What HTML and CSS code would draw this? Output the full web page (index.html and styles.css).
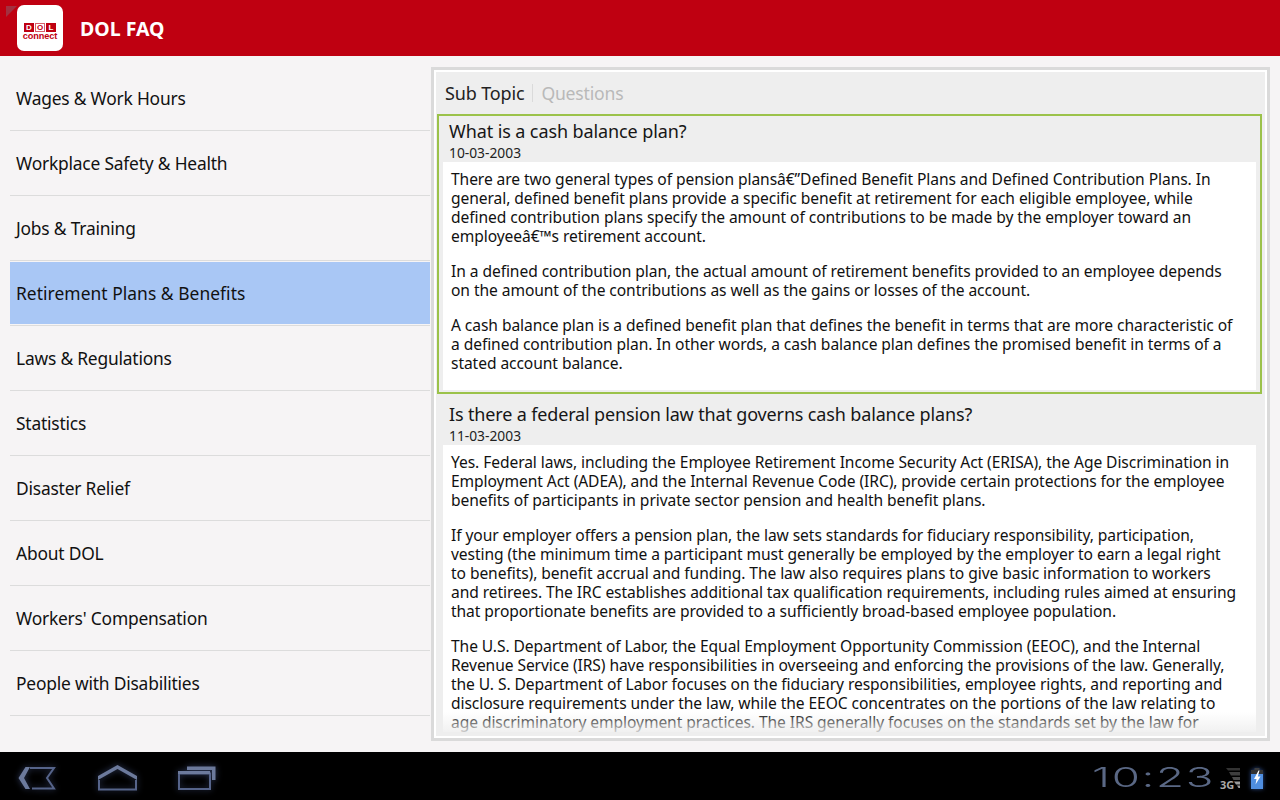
FILE: index.html
```html
<!DOCTYPE html>
<html lang="en">
<head>
<meta charset="utf-8">
<title>DOL FAQ</title>
<link rel="stylesheet" href="styles.css">
</head>
<body>
<div class="screen">
  <header class="appbar">
    <span class="corner"></span>
    <div class="logo">
      <div class="logo-boxes"><span>D</span><span class="open">O</span><span>L</span></div>
      <div class="logo-word">connect</div>
    </div>
    <h1 class="title">DOL FAQ</h1>
  </header>
  <main class="content">
    <nav class="topics">
      <div class="topic">Wages &amp; Work Hours</div>
      <div class="topic">Workplace Safety &amp; Health</div>
      <div class="topic">Jobs &amp; Training</div>
      <div class="topic selected">Retirement Plans &amp; Benefits</div>
      <div class="topic">Laws &amp; Regulations</div>
      <div class="topic">Statistics</div>
      <div class="topic">Disaster Relief</div>
      <div class="topic">About DOL</div>
      <div class="topic">Workers' Compensation</div>
      <div class="topic">People with Disabilities</div>
    </nav>
    <section class="panel">
      <div class="panel-inner">
        <div class="crumbs"><span class="crumb">Sub Topic</span><span class="crumb-sep"></span><span class="crumb muted">Questions</span></div>
        <article class="faq active">
          <h2 class="q">What is a cash balance plan?</h2>
          <div class="date">10-03-2003</div>
          <div class="answer">
            <p>There are two general types of pension plansâ€”Defined Benefit Plans and Defined Contribution Plans. In<br>general, defined benefit plans provide a specific benefit at retirement for each eligible employee, while<br>defined contribution plans specify the amount of contributions to be made by the employer toward an<br>employeeâ€™s retirement account.</p>
            <p>In a defined contribution plan, the actual amount of retirement benefits provided to an employee depends<br>on the amount of the contributions as well as the gains or losses of the account.</p>
            <p>A cash balance plan is a defined benefit plan that defines the benefit in terms that are more characteristic of<br>a defined contribution plan. In other words, a cash balance plan defines the promised benefit in terms of a<br>stated account balance.</p>
          </div>
        </article>
        <article class="faq">
          <h2 class="q">Is there a federal pension law that governs cash balance plans?</h2>
          <div class="date">11-03-2003</div>
          <div class="answer">
            <p>Yes. Federal laws, including the Employee Retirement Income Security Act (ERISA), the Age Discrimination in<br>Employment Act (ADEA), and the Internal Revenue Code (IRC), provide certain protections for the employee<br>benefits of participants in private sector pension and health benefit plans.</p>
            <p>If your employer offers a pension plan, the law sets standards for fiduciary responsibility, participation,<br>vesting (the minimum time a participant must generally be employed by the employer to earn a legal right<br>to benefits), benefit accrual and funding. The law also requires plans to give basic information to workers<br>and retirees. The IRC establishes additional tax qualification requirements, including rules aimed at ensuring<br>that proportionate benefits are provided to a sufficiently broad-based employee population.</p>
            <p>The U.S. Department of Labor, the Equal Employment Opportunity Commission (EEOC), and the Internal<br>Revenue Service (IRS) have responsibilities in overseeing and enforcing the provisions of the law. Generally,<br>the U. S. Department of Labor focuses on the fiduciary responsibilities, employee rights, and reporting and<br>disclosure requirements under the law, while the EEOC concentrates on the portions of the law relating to<br>age discriminatory employment practices. The IRS generally focuses on the standards set by the law for</p>
          </div>
        </article>
        <div class="fade"></div>
      </div>
    </section>
  </main>
  <footer class="sysbar">
    <div class="nav-icons">
      <svg class="nav-icon" width="38" height="24" viewBox="0 0 38 24" fill="none">
        <path d="M7.5 1 L0.5 12 L7.5 23 L12 23 L6 12 L12 1 Z" fill="#6c7a9c"/>
        <path d="M12 2 H36 L29 12 L36 22.5 H14" stroke="#56648a" stroke-width="2"/>
      </svg>
      <svg class="nav-icon home" width="40" height="26" viewBox="0 0 40 26" fill="none">
        <path d="M0 11 L19.5 0 L39 11 V15 L19.5 4 L0 15 Z" fill="#6c7a9c"/>
        <path d="M1 15 V24.5 H38 V15" stroke="#56648a" stroke-width="2"/>
      </svg>
      <svg class="nav-icon" width="38" height="24" viewBox="0 0 38 24" fill="none">
        <path d="M9 0.5 H37.5 V14 H34 V4 H9 Z" fill="#6c7a9c"/>
        <path d="M1 7.5 H32 V23 H1 Z" stroke="#56648a" stroke-width="2"/>
        <path d="M0 5 H32 V8 H0 Z" fill="#6c7a9c"/>
      </svg>
    </div>
    <div class="status">
      <span class="clock">10:23</span>
      <div class="signal">
        <svg width="20" height="20" viewBox="0 0 20 20">
          <path d="M5 0 H19 V2.5 H7 Z" fill="#333"/>
          <path d="M8 4 H19 V7.5 H10 Z" fill="#3e3e3e"/>
          <path d="M11 9 H19 V12 H12.5 Z" fill="#4a4a4a"/>
          <path d="M13 13.5 H19 V16.5 H15 Z" fill="#9a9a9a"/>
          <path d="M16 17.5 H19 V20 H17.5 Z" fill="#9a9a9a"/>
        </svg>
        <span class="net">3G</span>
      </div>
      <svg class="battery" width="12" height="21" viewBox="0 0 12 21">
        <rect x="3.5" y="0" width="5" height="3" fill="#3c3c3c"/>
        <rect x="0" y="2" width="12" height="6" fill="#333"/>
        <rect x="0" y="6" width="12" height="15" fill="#4f8ee0"/>
        <path d="M7.5 2.5 L3 11 H5.5 L4.5 16.5 L9.5 8.5 H6.8 L8.5 2.5 Z" fill="#fff"/>
      </svg>
    </div>
  </footer>
</div>
</body>
</html>
```

FILE: styles.css
```css
* { box-sizing: border-box; }
html, body { margin: 0; padding: 0; }
body { width: 1280px; height: 800px; overflow: hidden; font-family: "Noto Sans", "Open Sans", sans-serif; color: #111; }
.screen { width: 1280px; height: 800px; display: flex; flex-direction: column; background: #f6f4f5; }

.appbar { height: 56px; flex: none; background: #bf0011; display: flex; align-items: center; padding-left: 17px; position: relative; }
.corner { position: absolute; left: 6px; top: 6px; width: 0; height: 0; border-top: 11px solid #a33040; border-right: 11px solid transparent; }
.logo { width: 46px; height: 46px; background: #fff; border-radius: 7px; display: flex; flex-direction: column; align-items: center; padding-top: 18px; position: relative; z-index: 1; }
.logo-boxes { display: flex; gap: 1px; }
.logo-boxes span { width: 10px; height: 9px; background: #bf0011; color: #fff; font: bold 8px/9px "Liberation Sans", sans-serif; text-align: center; }
.logo-boxes .open { background: #fff; color: #bf0011; box-shadow: inset 0 0 0 1px #d9606c; }
.logo-word { font: bold 9.2px/9px "Liberation Sans", sans-serif; color: #bf0011; letter-spacing: -0.1px; margin-top: 0; }
.title { margin: 2px 0 0 17px; font-size: 19.5px; font-weight: 700; line-height: 26px; color: #fff; }

.content { flex: 1; min-height: 0; display: flex; }
.topics { width: 420px; margin-left: 10px; flex: none; padding-top: 10px; }
.topic { height: 65px; border-bottom: 1px solid #dcdcdc; padding-left: 6px; font-size: 17.4px; letter-spacing: -0.2px; line-height: 65px; color: #111; }
.topic.selected { background: #a9c7f5; height: 62px; margin: 1px 0 2px; line-height: 62px; letter-spacing: 0.05px; border-bottom: none; box-shadow: 0 1px 0 #f6f4f5, 0 2px 0 #dcdcdc; }

.panel { width: 839px; margin: 11px 0 11px 1px; background: #fff; border: 3px solid #dadada; padding: 0; flex: none; }
.panel-inner { position: relative; background: #eee; margin: 2px; height: calc(100% - 4px); overflow: hidden; padding: 0 3px 0 1px; }
.crumbs { height: 42px; display: flex; align-items: center; padding-left: 8px; }
.crumb { font-size: 18px; line-height: 24px; color: #222; letter-spacing: -0.15px; }
.crumb.muted { color: #b9b9b9; font-size: 17.6px; letter-spacing: -0.2px; }
.crumb-sep { width: 1px; height: 18px; background: #dadada; margin: 0 8px; }

.faq { padding: 0 4px; border: 2px solid transparent; margin: 0; }
.faq + .faq { margin-top: 2px; }
.faq.active { border-color: #9bc24a; height: 280px; }
.q { margin: 0; padding: 3px 0 0 6px; font-size: 18px; font-weight: 400; letter-spacing: -0.1px; line-height: 24px; color: #161616; }
.faq + .faq .q { padding-top: 4px; letter-spacing: -0.15px; }
.date { padding-left: 6px; margin-top: 1px; font-size: 13.8px; line-height: 18px; color: #222; height: 18px; }
.faq.active .answer { height: 228px; }
.answer { background: #fff; padding: 8px 8px 0; font-size: 15.6px; letter-spacing: -0.076px; line-height: 19px; color: #111; white-space: nowrap; }
.answer p { margin: 0 0 16px; }
.fade { position: absolute; left: 0; right: 0; bottom: 0; height: 24px; background: linear-gradient(to bottom, rgba(238,238,238,0), #eee); }

.sysbar { height: 48px; flex: none; background: #000; display: flex; align-items: center; justify-content: space-between; }
.nav-icons { display: flex; align-items: center; gap: 41px; padding-left: 18px; padding-top: 3px; }
.nav-icon { filter: drop-shadow(0 0 3px rgba(90,110,170,.55)); }
.nav-icon.home { margin: 0 -1px 0 1px; }
.status { display: flex; align-items: center; padding-right: 17px; padding-top: 5px; }
.clock { font-family: "Inter", sans-serif; font-weight: 300; font-size: 27.5px; line-height: 24px; letter-spacing: 1px; color: #5a6885; width: 129px; margin-bottom: 4px; display: inline-block; transform: scaleX(1.66); transform-origin: left; }
.signal { position: relative; width: 20px; height: 21px; margin-right: 10px; }
.signal svg { position: absolute; right: 0; top: 0; }
.net { position: absolute; left: -1px; bottom: -2px; font-size: 11px; line-height: 12px; font-weight: 700; color: #aaa; }
.battery { filter: drop-shadow(0 0 2px rgba(70,120,220,.6)); }
```
